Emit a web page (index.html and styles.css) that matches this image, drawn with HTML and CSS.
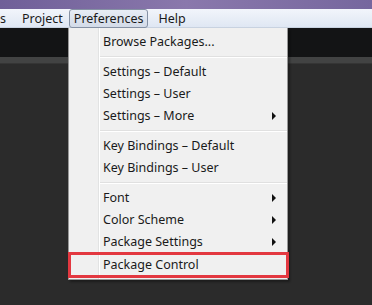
FILE: index.html
```html
<!DOCTYPE html>
<html>
<head>
<meta charset="utf-8">
<title>Preferences menu</title>
<link rel="stylesheet" href="styles.css">
</head>
<body>
<div class="titlebar"></div>
<div class="menubar">
    <span class="top-item cut">s</span>
    <span class="top-item">Project</span>
    <span class="top-item open">Preferences</span>
    <span class="top-item">Help</span>
</div>
<div class="workspace">
    <div class="tabs"></div>
    <div class="tabline"></div>
    <div class="editor"></div>

    <!-- dropdown for Preferences -->
    <div class="dropdown">
        <div class="row">Browse Packages...</div>
        <div class="sep"></div>
        <div class="row">Settings &ndash; Default</div>
        <div class="row">Settings &ndash; User</div>
        <div class="row sub">Settings &ndash; More</div>
        <div class="sep"></div>
        <div class="row">Key Bindings &ndash; Default</div>
        <div class="row">Key Bindings &ndash; User</div>
        <div class="sep"></div>
        <div class="row sub">Font</div>
        <div class="row sub">Color Scheme</div>
        <div class="row sub">Package Settings</div>
        <div class="row marked">Package Control</div>
    </div>
</div>
</body>
</html>
```
FILE: styles.css
```css
* {
    box-sizing: border-box;
}
html, body {
    margin: 0;
    height: 100%;
    background-color: #2b2b2b;
    overflow: hidden;
    font-family: "Noto Sans", "Open Sans", sans-serif;
    font-size: 12.5px;
    color: #1a1a1a;
}
.titlebar {
    height: 9px;
    background: linear-gradient(to right, #6f5f98, #8a78ac 50%, #76679e);
}
.menubar {
    height: 19px;
    display: flex;
    align-items: center;
    background: linear-gradient(#f2f5fb, #dfe7f3);
    border-bottom: 1px solid #c8d2e0;
}
.top-item {
    padding: 0 7px;
    line-height: 17px;
    border: 1px solid transparent;
}
.top-item.cut {
    margin-left: -1px;
    padding: 0 7px 0 0;
}
.top-item.open {
    border-color: #8591a4;
    border-radius: 3px;
    background: linear-gradient(#e8edf5, #d3dbe8);
    padding: 0 4px;
    margin: 0 2px 0 -2px;
}
.workspace {
    position: relative;
    height: 277px;
}
.tabs {
    height: 29px;
    background-color: #131415;
}
.tabline {
    height: 7px;
    background-color: #424343;
    border-bottom: 1px solid #353535;
}
.editor {
    height: 240px;
    background-color: #2b2b2b;
}
.dropdown {
    position: absolute;
    left: 68px;
    top: 0;
    width: 220px;
    padding: 3px 0 1px 0;
    background: linear-gradient(to right, #f0f0f0 29px, #e2e3e3 29px, #e2e3e3 30px, #ffffff 30px, #ffffff 31px, #f0f0f0 31px);
    border: 1px solid #979797;
    border-top: none;
    box-shadow: 2px 2px 2px rgba(0, 0, 0, 0.35);
}
.row {
    position: relative;
    height: 22px;
    line-height: 21px;
    padding-left: 34px;
}
.row.sub::after {
    content: "";
    position: absolute;
    right: 11px;
    top: 7px;
    border-left: 4px solid #111;
    border-top: 4px solid transparent;
    border-bottom: 4px solid transparent;
}
.sep {
    height: 8px;
    margin-left: 31px;
    border-top: 3px solid #f0f0f0;
    border-bottom: 3px solid #f0f0f0;
    background: linear-gradient(#e0e0e0 50%, #ffffff 50%);
}
.row.marked {
    margin: -1px -2px 0 -1px;
    padding-left: 32px;
    height: 26px;
    line-height: 20px;
    border: 3px solid #e33840;
}
```
